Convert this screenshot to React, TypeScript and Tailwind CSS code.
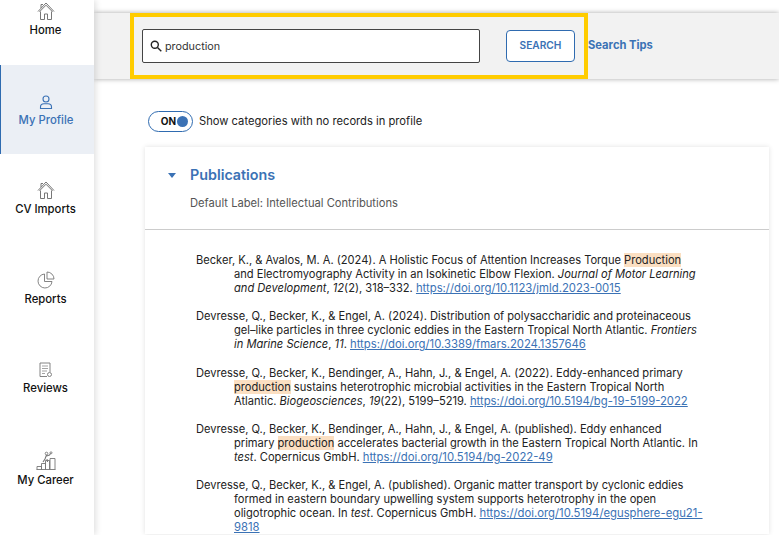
import { Fragment, type ReactNode } from "react"

function HomeIcon() {
  return (
    <svg width="18" height="18" viewBox="0 0 18 18" fill="none" stroke="#777" strokeWidth="1">
      <path d="M1 9.500 9 1l8 8.500" />
      <path d="M2.500 9.800 9 3.200l6.500 6.600" />
      <path d="M3.500 9.500v8h4v-5.500h3v5.500h4v-8" />
      <path d="M4 2.500v3.500M4 2.500h2" />
    </svg>
  )
}

function ProfileIcon() {
  return (
    <svg width="14" height="15" viewBox="0 0 14 15" fill="none" stroke="#3b72b5" strokeWidth="1.100">
      <circle cx="7" cy="4" r="3" />
      <path d="M1.500 13.500v-1.500c0-2 1.600-3.200 3.500-3.200h4c1.900 0 3.500 1.200 3.500 3.200v1.500z" />
    </svg>
  )
}

function ReportsIcon() {
  return (
    <svg width="18" height="18" viewBox="0 0 18 18" fill="none" stroke="#777" strokeWidth="0.9">
      <path d="M7.500 3A7 7 0 1 0 15 10.500H7.500z" />
      <path d="M10 1a7 7 0 0 1 7 7h-7z" />
    </svg>
  )
}

function ReviewsIcon() {
  return (
    <svg width="14" height="16" viewBox="0 0 14 16" fill="none" stroke="#777" strokeWidth="0.9">
      <path d="M8 14.500H1V1h10v9" />
      <path d="M3 4h6M3 6.500h6M3 9h5M3 11.500h3" stroke="#999" />
      <circle cx="10.500" cy="12.500" r="2" />
    </svg>
  )
}

function CareerIcon() {
  return (
    <svg width="20" height="19" viewBox="0 0 20 19" fill="none" stroke="#777" strokeWidth="0.9">
      <path d="M1 18.500v-3h4.500v3M5.500 18.500v-6h4v6M9.500 18.500v-9h4v9M14 18.500V7.500h5v11M0.500 18.500h19" />
      <circle cx="10.500" cy="2.500" r="1.300" />
      <circle cx="15" cy="1.800" r="1" />
      <path d="M10.500 4 9 8l-2 3M10.500 5l3-1 1-1.500M11 8l.5 3" strokeWidth="1.100" />
    </svg>
  )
}

function SearchIcon() {
  return (
    <svg width="12" height="12" viewBox="0 0 12 12" fill="none" stroke="#222" strokeWidth="1.400">
      <circle cx="4.800" cy="4.800" r="3.500" />
      <path d="m7.500 7.500 3.800 3.800" />
    </svg>
  )
}

function NavItem({ label, icon, active }: { label: string; icon: ReactNode; active?: boolean }) {
  return (
    <div
      className={`flex flex-col items-center justify-center gap-[3px] pr-[3px] text-[11.3px] font-medium ${
        active ? "h-[89px] pt-[2px] bg-[#ebeff5] text-[#3b72b5] border-l border-[#2f6bb0]" : "h-[90px] pb-[1px] text-[#111]"
      }`}
    >
      {icon}
      <span className="leading-[14px]">{label}</span>
    </div>
  )
}

function Hl({ children }: { children: ReactNode }) {
  return <span className="bg-[#fbdfc2]">{children}</span>
}

function Doi({ href }: { href: string }) {
  return <a className="text-[11.300px] text-[#3b72b5] underline">{href}</a>
}

const refs: ReactNode[] = [
  <Fragment>
    Becker, K., &amp; Avalos, M. A. (2024). A Holistic Focus of Attention Increases Torque <Hl>Production</Hl> and
    Electromyography Activity in an Isokinetic Elbow Flexion. <i>Journal of Motor Learning and Development</i>,{" "}
    <i>12</i>(2), 318–332. <Doi href="https://doi.org/10.1123/jmld.2023-0015" />
  </Fragment>,
  <Fragment>
    Devresse, Q., Becker, K., &amp; Engel, A. (2024). Distribution of polysaccharidic and proteinaceous gel–like
    particles in three cyclonic eddies in the Eastern Tropical North Atlantic. <i>Frontiers in Marine Science</i>,{" "}
    <i>11</i>. <Doi href="https://doi.org/10.3389/fmars.2024.1357646" />
  </Fragment>,
  <Fragment>
    Devresse, Q., Becker, K., Bendinger, A., Hahn, J., &amp; Engel, A. (2022). Eddy-enhanced primary{" "}
    <Hl>production</Hl> sustains heterotrophic microbial activities in the Eastern Tropical North Atlantic.{" "}
    <i>Biogeosciences</i>, <i>19</i>(22), 5199–5219. <Doi href="https://doi.org/10.5194/bg-19-5199-2022" />
  </Fragment>,
  <Fragment>
    Devresse, Q., Becker, K., Bendinger, A., Hahn, J., &amp; Engel, A. (published). Eddy enhanced primary{" "}
    <Hl>production</Hl> accelerates bacterial growth in the Eastern Tropical North Atlantic. In <i>test</i>.
    Copernicus GmbH. <Doi href="https://doi.org/10.5194/bg-2022-49" />
  </Fragment>,
  <Fragment>
    Devresse, Q., Becker, K., &amp; Engel, A. (published). Organic matter transport by cyclonic eddies formed in
    eastern boundary upwelling system supports heterotrophy in the open oligotrophic ocean. In <i>test</i>. Copernicus
    GmbH. <Doi href="https://doi.org/10.5194/egusphere-egu21-9818" />
  </Fragment>,
]

export default function App() {
  return (
    <div className="w-[779px] h-[535px] overflow-hidden flex bg-white font-['Inter',sans-serif]">
      {/* Sidebar */}
      <div className="w-[94px] shrink-0 z-10 bg-white shadow-[2px_0_6px_rgba(0,0,0,0.12)]">
        <div className="h-[65px] flex flex-col items-center pr-[3px] pt-[2px] gap-[3px] text-[11.3px] font-medium text-[#111]">
          <HomeIcon />
          <span className="leading-[14px]">Home</span>
        </div>
        <NavItem label="My Profile" icon={<ProfileIcon />} active />
        <NavItem label="CV Imports" icon={<HomeIcon />} />
        <NavItem label="Reports" icon={<ReportsIcon />} />
        <NavItem label="Reviews" icon={<ReviewsIcon />} />
        <NavItem label="My Career" icon={<CareerIcon />} />
      </div>

      {/* Main */}
      <div className="flex-1 min-w-0 pt-[13px]">
        {/* Search bar */}
        <div className="h-[66px] bg-[#f2f2f2] shadow-[0_0_5px_rgba(0,0,0,0.35)] flex items-center pl-[36px]">
          <div className="w-[458px] h-[66px] shrink-0 border-[4px] border-[#ffcc00] flex items-center pl-[8px]">
            <div className="w-[338px] h-[34px] bg-white border border-[#444] rounded-[2px] flex items-center gap-[3px] pl-[7px] text-[10.8px] text-[#333]">
              <SearchIcon />
              <span className="pt-[2px]">production</span>
            </div>
            <button className="ml-[26px] w-[69px] h-[32px] bg-white border border-[#2f6bb0] rounded-[4px] text-[10.200px] font-semibold text-[#3b72b5]">
              SEARCH
            </button>
          </div>
          <a className="pb-[1px] text-[11.200px] font-bold text-[#3b72b5]">Search Tips</a>
        </div>

        {/* Toggle row */}
        <div className="mt-[32px] ml-[54px] flex items-center gap-[6px]">
          <div className="w-[45px] h-[21px] rounded-full border border-[#2f6bb0] flex items-center justify-end gap-[1px] pr-[4px]">
            <span className="text-[10px] font-bold text-[#111]">ON</span>
            <span className="w-[11px] h-[11px] rounded-full bg-[#3b72b5]" />
          </div>
          <span className="text-[11.200px] text-[#222]">Show categories with no records in profile</span>
        </div>

        {/* Publications card */}
        <div className="mt-[15px] ml-[51px] mr-[10px] bg-white shadow-[0_0_5px_rgba(0,0,0,0.12)]">
          <div className="h-[83px] border-b border-[#ccc] pt-[18px] pl-[23px]">
            <div className="flex items-center gap-[14px]">
              <span className="w-0 h-0 border-x-[4.500px] border-x-transparent border-t-[5px] border-t-[#3b72b5]" />
              <span className="text-[14.300px] font-semibold text-[#3b72b5] leading-[20px]">Publications</span>
            </div>
            <div className="mt-[10px] ml-[22px] text-[11.200px] text-[#555]">
              Default Label: Intellectual Contributions
            </div>
          </div>
          <div className="pt-[23px] pl-[89px] pr-[66px] flex flex-col gap-[14.300px] text-[11.120px] leading-[14px] text-[#222]">
            {refs.map((r, i) => (
              <p key={i} className="pl-[38px] -indent-[38px] -ml-[38px]">
                {r}
              </p>
            ))}
          </div>
        </div>
      </div>
    </div>
  )
}
